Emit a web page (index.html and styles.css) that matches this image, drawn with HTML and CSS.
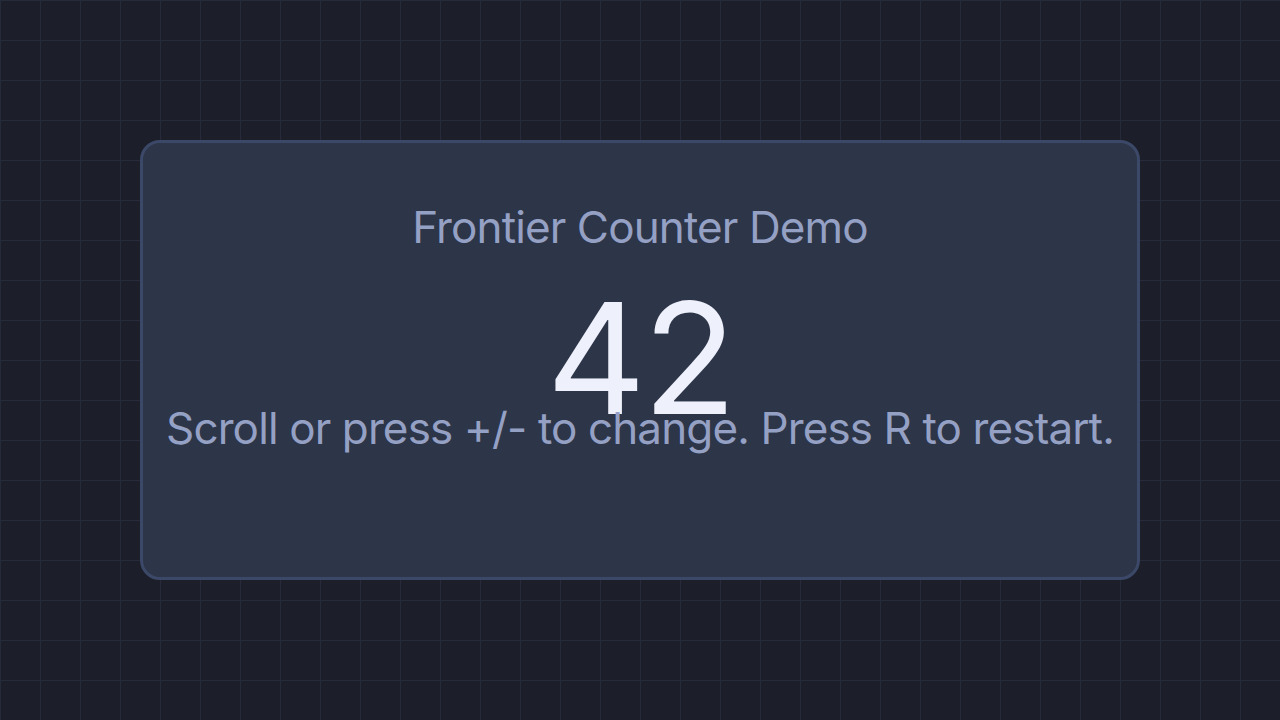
FILE: index.html
```html
<!DOCTYPE html>
<html lang="en">
<head>
<meta charset="utf-8">
<title>Frontier Counter Demo</title>
<link rel="stylesheet" href="styles.css">
</head>
<body>
<main class="stage">
  <section class="card">
    <h1 class="title">Frontier Counter Demo</h1>
    <div class="count">42</div>
    <p class="hint">Scroll or press +/- to change. Press R to restart.</p>
  </section>
</main>
</body>
</html>
```
FILE: styles.css
```css
html, body {
  margin: 0;
  padding: 0;
  height: 100%;
}
body {
  background-color: #1c1f2a;
  background-image:
    linear-gradient(to right, #262b3b 1px, transparent 1px),
    linear-gradient(to bottom, #262b3b 1px, transparent 1px);
  background-size: 40px 40px;
  font-family: Inter, "Noto Sans", sans-serif;
  overflow: hidden;
}
.stage {
  display: flex;
  justify-content: center;
  padding-top: 140px;
}
.card {
  box-sizing: border-box;
  width: 1000px;
  height: 440px;
  background: #2d3548;
  border: 3px solid #3c4868;
  border-radius: 20px;
  display: flex;
  flex-direction: column;
  align-items: center;
  padding-top: 62px;
}
.title {
  margin: 0;
  font-size: 44px;
  line-height: 1;
  font-weight: 400;
  letter-spacing: -0.02em;
  color: #94a0c4;
}
.count {
  margin-top: 56px;
  font-size: 154px;
  line-height: 0.7;
  font-weight: 400;
  letter-spacing: -0.02em;
  color: #eef0fb;
}
.hint {
  margin: -7px 0 0;
  font-size: 44px;
  line-height: 1;
  letter-spacing: -0.02em;
  color: #94a0c4;
}
```
